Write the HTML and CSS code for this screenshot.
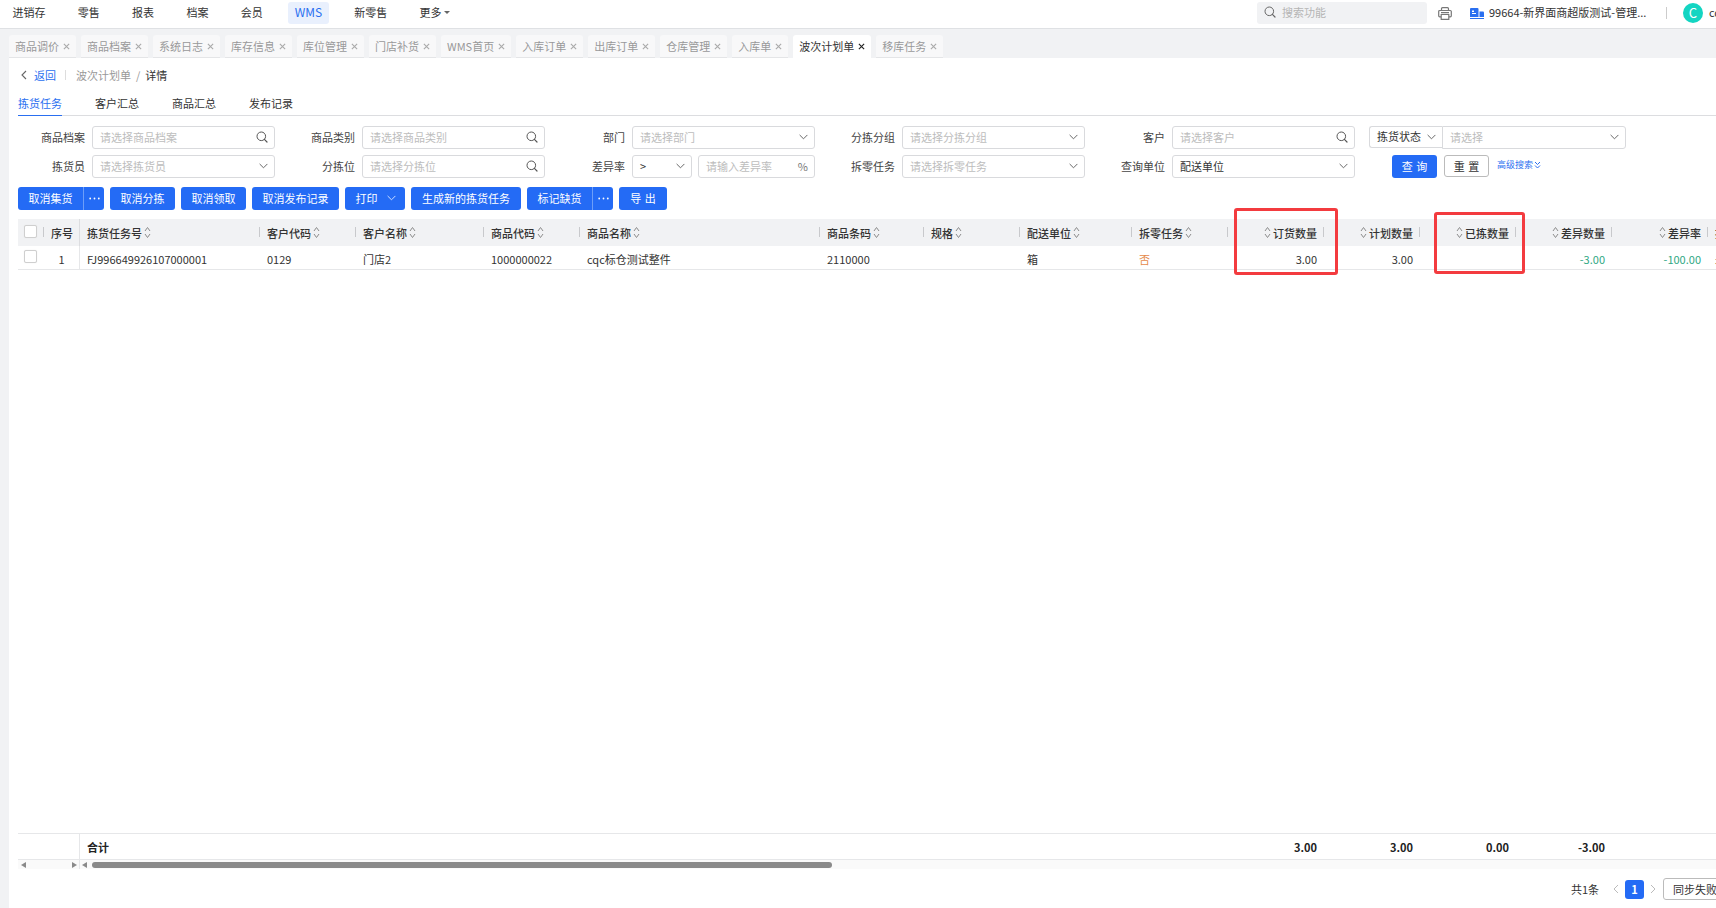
FILE: index.html
```html
<!DOCTYPE html>
<html lang="zh-CN">
<head>
<meta charset="utf-8">
<title>波次计划单详情</title>
<link rel="stylesheet" href="styles.css">
</head>
<body>
<svg class="sprite" aria-hidden="true">
  <symbol id="search" viewBox="0 0 12 12"><circle cx="5.3" cy="5.3" r="4.3" fill="none" stroke="currentColor" stroke-width="1"/><path d="M8.4 8.4 11 11" fill="none" stroke="currentColor" stroke-width="1.2" stroke-linecap="round"/></symbol>
  <symbol id="down" viewBox="0 0 10 6"><path d="M1 1l4 4 4-4" fill="none" stroke="currentColor" stroke-width="1.1" stroke-linecap="round" stroke-linejoin="round"/></symbol>
  <symbol id="close" viewBox="0 0 8 8"><path d="M1 1l6 6M7 1 1 7" fill="none" stroke="currentColor" stroke-width="1.3"/></symbol>
  <symbol id="sort" viewBox="0 0 7 13"><path d="M1 5l2.5-3.5L6 5M1 8l2.5 3.5L6 8" fill="none" stroke="#8c8c8c" stroke-width="1"/></symbol>
  <symbol id="more" viewBox="0 0 11 3"><circle cx="1.200" cy="1.500" r="0.900" fill="#fff"/><circle cx="5.500" cy="1.500" r="0.900" fill="#fff"/><circle cx="9.800" cy="1.500" r="0.900" fill="#fff"/></symbol>
</svg>

<header class="topbar">
  <nav class="menu">
    <a class="menu-item">进销存</a>
    <a class="menu-item">零售</a>
    <a class="menu-item">报表</a>
    <a class="menu-item">档案</a>
    <a class="menu-item">会员</a>
    <a class="menu-item is-active">WMS</a>
    <a class="menu-item">新零售</a>
    <a class="menu-item">更多<i class="caret"></i></a>
  </nav>
  <div class="top-right">
    <div class="global-search"><svg class="ic-12"><use href="#search"/></svg><span>搜索功能</span></div>
    <svg class="printer" viewBox="0 0 14 13"><path d="M3.500 3.500V1.700a1 1 0 0 1 1-1h5a1 1 0 0 1 1 1v1.800M3.200 9.800H1.700a1 1 0 0 1-1-1V4.500a1 1 0 0 1 1-1h10.600a1 1 0 0 1 1 1v4.300a1 1 0 0 1-1 1h-1.500M3.200 7.500h7.600v4.800H3.200zM3 5.600h8" fill="none" stroke="#777" stroke-width="1.200"/></svg>
    <svg class="shop" viewBox="0 0 14 11"><path d="M0 1a1 1 0 0 1 1-1h6.500a1 1 0 0 1 1 1v8H0z" fill="#2a6ff0"/><path d="M9.500 3.500H13a1 1 0 0 1 1 1V9H9.500z" fill="#2a6ff0"/><path d="M2 2.500h2v1.500H2zM2 5h4v1H2z" fill="#fff"/><path d="M0 10h14v1H0z" fill="#2a6ff0"/></svg>
    <span class="shop-name">99664-新界面商超版测试-管理...</span>
    <i class="top-sep"></i>
    <span class="avatar">C</span>
    <span class="user">cqc</span>
  </div>
</header>

<div class="tabbar">
  <div class="tab">商品调价<svg class="x"><use href="#close"/></svg></div>
  <div class="tab">商品档案<svg class="x"><use href="#close"/></svg></div>
  <div class="tab">系统日志<svg class="x"><use href="#close"/></svg></div>
  <div class="tab">库存信息<svg class="x"><use href="#close"/></svg></div>
  <div class="tab">库位管理<svg class="x"><use href="#close"/></svg></div>
  <div class="tab">门店补货<svg class="x"><use href="#close"/></svg></div>
  <div class="tab">WMS首页<svg class="x"><use href="#close"/></svg></div>
  <div class="tab">入库订单<svg class="x"><use href="#close"/></svg></div>
  <div class="tab">出库订单<svg class="x"><use href="#close"/></svg></div>
  <div class="tab">仓库管理<svg class="x"><use href="#close"/></svg></div>
  <div class="tab">入库单<svg class="x"><use href="#close"/></svg></div>
  <div class="tab is-active">波次计划单<svg class="x"><use href="#close"/></svg></div>
  <div class="tab">移库任务<svg class="x"><use href="#close"/></svg></div>
</div>

<main class="page">
  <div class="crumbs">
    <svg class="back-ic" viewBox="0 0 6 10"><path d="M5 1 1 5l4 4" fill="none" stroke="#666" stroke-width="1.1"/></svg>
    <a class="back">返回</a>
    <i class="crumb-sep"></i>
    <span class="crumb-muted">波次计划单</span>
    <span class="crumb-slash">/</span>
    <span class="crumb-now">详情</span>
  </div>

  <div class="subtabs">
    <a class="subtab is-active">拣货任务</a>
    <a class="subtab">客户汇总</a>
    <a class="subtab">商品汇总</a>
    <a class="subtab">发布记录</a>
  </div>

  <form class="filters">
    <div class="f-item"><label>商品档案</label><div class="field"><span class="ph">请选择商品档案</span><svg class="ic-12"><use href="#search"/></svg></div></div>
    <div class="f-item"><label>商品类别</label><div class="field"><span class="ph">请选择商品类别</span><svg class="ic-12"><use href="#search"/></svg></div></div>
    <div class="f-item"><label>部门</label><div class="field"><span class="ph">请选择部门</span><svg class="ic-down"><use href="#down"/></svg></div></div>
    <div class="f-item"><label>分拣分组</label><div class="field"><span class="ph">请选择分拣分组</span><svg class="ic-down"><use href="#down"/></svg></div></div>
    <div class="f-item"><label>客户</label><div class="field"><span class="ph">请选择客户</span><svg class="ic-12"><use href="#search"/></svg></div></div>
    <div class="f-joined">
      <div class="field field-key"><span>拣货状态</span><svg class="ic-down"><use href="#down"/></svg></div>
      <div class="field field-val"><span class="ph">请选择</span><svg class="ic-down"><use href="#down"/></svg></div>
    </div>

    <div class="f-item"><label>拣货员</label><div class="field"><span class="ph">请选择拣货员</span><svg class="ic-down"><use href="#down"/></svg></div></div>
    <div class="f-item"><label>分拣位</label><div class="field"><span class="ph">请选择分拣位</span><svg class="ic-12"><use href="#search"/></svg></div></div>
    <div class="f-item"><label>差异率</label>
      <div class="f-pair">
        <div class="field field-op"><span>&gt;</span><svg class="ic-down"><use href="#down"/></svg></div>
        <div class="field field-num"><span class="ph">请输入差异率</span><span class="pct">%</span></div>
      </div>
    </div>
    <div class="f-item"><label>拆零任务</label><div class="field"><span class="ph">请选择拆零任务</span><svg class="ic-down"><use href="#down"/></svg></div></div>
    <div class="f-item"><label>查询单位</label><div class="field"><span>配送单位</span><svg class="ic-down"><use href="#down"/></svg></div></div>
    <div class="f-actions">
      <button type="button" class="btn btn-query">查 询</button>
      <button type="button" class="btn-reset">重 置</button>
      <a class="adv">高级搜索<svg class="adv-ic" viewBox="0 0 7 8"><path d="M1 1l2.500 2.500L6 1M1 4.500 3.500 7 6 4.500" fill="none" stroke="#2a6ff0" stroke-width="1"/></svg></a>
    </div>
  </form>

  <div class="toolbar">
    <div class="btn btn-split"><span class="btn-main">取消集货</span><span class="btn-more"><svg class="more-ic"><use href="#more"/></svg></span></div>
    <button type="button" class="btn">取消分拣</button>
    <button type="button" class="btn">取消领取</button>
    <button type="button" class="btn">取消发布记录</button>
    <button type="button" class="btn btn-print">打印<svg class="ic-down"><use href="#down"/></svg></button>
    <button type="button" class="btn btn-gen">生成新的拣货任务</button>
    <div class="btn btn-split"><span class="btn-main">标记缺货</span><span class="btn-more"><svg class="more-ic"><use href="#more"/></svg></span></div>
    <button type="button" class="btn btn-export">导 出</button>
  </div>

  <section class="grid-wrap">
    <div class="clip">
      <div class="row row-head">
        <div class="c c-check"><i class="check"></i></div>
        <div class="c c-no">序号</div>
        <div class="c">拣货任务号<svg class="sort"><use href="#sort"/></svg></div>
        <div class="c">客户代码<svg class="sort"><use href="#sort"/></svg></div>
        <div class="c">客户名称<svg class="sort"><use href="#sort"/></svg></div>
        <div class="c">商品代码<svg class="sort"><use href="#sort"/></svg></div>
        <div class="c">商品名称<svg class="sort"><use href="#sort"/></svg></div>
        <div class="c">商品条码<svg class="sort"><use href="#sort"/></svg></div>
        <div class="c">规格<svg class="sort"><use href="#sort"/></svg></div>
        <div class="c">配送单位<svg class="sort"><use href="#sort"/></svg></div>
        <div class="c">拆零任务<svg class="sort"><use href="#sort"/></svg></div>
        <div class="c c-num"><svg class="sort"><use href="#sort"/></svg>订货数量</div>
        <div class="c c-num"><svg class="sort"><use href="#sort"/></svg>计划数量</div>
        <div class="c c-num"><svg class="sort"><use href="#sort"/></svg>已拣数量</div>
        <div class="c c-num"><svg class="sort"><use href="#sort"/></svg>差异数量</div>
        <div class="c c-num"><svg class="sort"><use href="#sort"/></svg>差异率</div>
        <div class="c">拣货状态</div>
      </div>
      <div class="row row-body">
        <div class="c c-check"><i class="check"></i></div>
        <div class="c c-no c-center">1</div>
        <div class="c">FJ996649926107000001</div>
        <div class="c">0129</div>
        <div class="c">门店2</div>
        <div class="c">1000000022</div>
        <div class="c">cqc标仓测试整件</div>
        <div class="c">2110000</div>
        <div class="c"></div>
        <div class="c">箱</div>
        <div class="c c-orange">否</div>
        <div class="c c-num">3.00</div>
        <div class="c c-num">3.00</div>
        <div class="c c-num"></div>
        <div class="c c-num c-green">-3.00</div>
        <div class="c c-num c-green">-100.00</div>
        <div class="c">未拣货</div>
      </div>
    </div>
    <div class="mark mark-a"></div>
    <div class="mark mark-b"></div>
  </section>

  <div class="spacer"></div>

  <div class="row row-sum">
    <div class="c c-lead"></div>
    <div class="c c-total">合计</div>
    <div class="c c-num c-s1">3.00</div>
    <div class="c c-num">3.00</div>
    <div class="c c-num">0.00</div>
    <div class="c c-num">-3.00</div>
  </div>
  <div class="hscroll">
    <div class="hs-left">
      <i class="arr arr-l"></i><i class="arr arr-r"></i>
    </div>
    <div class="hs-right">
      <i class="arr arr-l"></i><i class="thumb"></i>
    </div>
  </div>

  <footer class="pager">
    <span class="total">共1条</span>
    <svg class="pg-ic" viewBox="0 0 6 10"><path d="M5 1 1 5l4 4" fill="none" stroke="#bbb" stroke-width="1"/></svg>
    <span class="pg-num">1</span>
    <svg class="pg-ic" viewBox="0 0 6 10"><path d="m1 1 4 4-4 4" fill="none" stroke="#bbb" stroke-width="1"/></svg>
    <button type="button" class="pg-btn">同步失败</button>
  </footer>
</main>
</body>
</html>
```
FILE: styles.css
```css
* { box-sizing: border-box; }
html, body { margin: 0; height: 100%; }
body {
  width: 1716px;
  height: 908px;
  overflow: hidden;
  display: flex;
  flex-direction: column;
  background: #f1f2f4;
  color: #333;
  font: 11px/16px "Noto Sans CJK SC", "Noto Sans", sans-serif;
}
i { font-style: normal; }
svg { flex: none; }
.sprite { display: none; }
button { font: inherit; border: 0; padding: 0; }

/* top bar */
.topbar {
  flex: none;
  height: 29px;
  display: flex;
  align-items: flex-start;
  background: #fff;
  border-bottom: 1px solid #dfe1e4;
  overflow: hidden;
  padding-top: 2px;
}
.menu {
  flex: none;
  width: 1257px;
  display: flex;
  gap: 18.3px;
  padding-left: 5.5px;
}
.menu-item {
  height: 22px;
  padding: 0 7px 2px;
  display: flex;
  align-items: center;
  border-radius: 3px;
  color: #333;
}
.menu-item.is-active {
  width: 41px;
  justify-content: center;
  background: #e9f0fd;
  color: #2a6ff0;
  font-size: 12px;
}
.caret {
  margin-left: 2px;
  border: 3px solid transparent;
  border-top: 3px solid #666;
  border-bottom: 0;
}
.top-right { flex: none; display: flex; align-items: center; height: 22px; }
.global-search {
  width: 170px;
  height: 22px;
  display: flex;
  align-items: center;
  gap: 6px;
  padding: 0 0 2px 7px;
  background: #f1f2f4;
  border-radius: 3px;
  color: #b5b5b5;
}
.global-search .ic-12 { color: #666; }
.ic-12 { width: 12px; height: 12px; color: #555; }
.ic-down { width: 9px; height: 6px; color: #666; }
.printer { width: 14px; height: 13px; margin-left: 11px; }
.shop { width: 14px; height: 11px; margin-left: 18px; }
.shop-name { margin: 0 0 2px 5px; width: 160px; white-space: nowrap; color: #333; }
.top-sep { width: 1px; height: 12px; background: #ccc; margin-left: 17px; }
.avatar {
  width: 20px;
  height: 20px;
  margin-left: 16px;
  border-radius: 50%;
  background: #13d5c2;
  color: #fff;
  font-size: 13px;
  text-align: center;
  line-height: 20px;
}
.user { margin: 0 0 2px 6px; white-space: nowrap; }

/* open pages */
.tabbar {
  flex: none;
  height: 29px;
  padding: 6px 0 0 9px;
  display: flex;
  gap: 5px;
}
.tab {
  height: 23px;
  padding: 0 6px;
  display: flex;
  align-items: center;
  gap: 4px;
  background: #f8f8f9;
  border-bottom: 1px solid #e4e5e7;
  border-radius: 3px 3px 0 0;
  color: #999;
  white-space: nowrap;
}
.tab.is-active { background: #fff; border-bottom-color: #fff; color: #333; }
.x { width: 7px; height: 7px; color: #aaa; }
.is-active .x { color: #222; }

/* page */
.page {
  flex: 1;
  min-height: 0;
  margin-left: 9px;
  background: #fff;
  display: flex;
  flex-direction: column;
}
.crumbs {
  flex: none;
  height: 36px;
  display: flex;
  align-items: center;
  padding: 0 0 2px 12px;
}
.back-ic { width: 6px; height: 10px; }
.back { margin-left: 7px; color: #2a6ff0; }
.crumb-sep { width: 1px; height: 10px; background: #ddd; margin: 0 10px 0 9px; }
.crumb-muted { color: #999; }
.crumb-slash { margin: 0 5px; color: #999; }
.crumb-now { color: #333; }

.subtabs {
  flex: none;
  height: 22px;
  margin-left: 9px;
  display: flex;
  gap: 33px;
  border-bottom: 1px solid #dcdde0;
}
.subtab { height: 22px; line-height: 18px; color: #333; }
.subtab.is-active { color: #2a6ff0; border-bottom: 1px solid #2a6ff0; }

/* filters */
.filters {
  flex: none;
  margin: 10px 0 0 9px;
  display: grid;
  grid-template-columns: repeat(5, 257px) 258px;
  column-gap: 13px;
  row-gap: 6px;
  grid-auto-rows: 23px;
}
.f-item { display: flex; align-items: center; gap: 7px; }
.f-item label { flex: none; width: 67px; padding-bottom: 2px; text-align: right; color: #444; }
.field {
  flex: 1;
  min-width: 0;
  height: 23px;
  padding: 0 6px 1px 7px;
  display: flex;
  align-items: center;
  justify-content: space-between;
  background: #fff;
  border: 1px solid #d9dadd;
  border-radius: 3px;
  white-space: nowrap;
}
.ph { color: #bdbdbd; }
.field > span { margin-top: -1px; }
.f-joined { display: flex; align-items: flex-start; margin-left: 1px; }
.field-key { flex: none; width: 73px; border-right: 0; height: 22px; border-radius: 3px 0 0 3px; padding-right: 6px; }
.field-val { flex: 1; border-radius: 0 3px 3px 0; }
.f-pair { flex: 1; display: flex; gap: 6px; }
.field-op { flex: none; width: 60px; }
.pct { color: #777; }
.f-actions { display: flex; align-items: flex-start; margin-left: 24px; }
.btn-query { width: 45px; height: 22px; padding: 0 0 1px; word-spacing: 1px; }
.btn-reset {
  width: 45px;
  height: 22px;
  margin-left: 7px;
  padding: 0 0 1px;
  background: #fff;
  border: 1px solid #bbb;
  border-radius: 3px;
  color: #333;
  word-spacing: 1px;
}
.adv { display: flex; align-items: center; gap: 1px; height: 20px; margin-left: 8px; color: #2a6ff0; font-size: 9px; }
.adv-ic { width: 7px; height: 8px; }

/* toolbar */
.toolbar {
  flex: none;
  margin: 9px 0 0 9px;
  display: flex;
  gap: 6px;
}
.btn {
  height: 23px;
  padding: 0 10.5px 1px;
  display: flex;
  align-items: center;
  justify-content: center;
  background: #246bf5;
  color: #fff;
  border-radius: 3px;
  white-space: nowrap;
}
.btn-split { padding: 0; }
.btn-main { width: 65px; padding-bottom: 1px; text-align: center; }
.btn-more {
  width: 21px;
  height: 23px;
  display: flex;
  align-items: center;
  justify-content: center;
  border-left: 1px solid #6d9ef8;
}
.more-ic { width: 11px; height: 3px; }
.btn-print { width: 60px; gap: 9px; padding: 0 0 1px 1px; }
.btn-print .ic-down { color: #cfe0ff; }
.btn-gen { width: 110px; padding: 0 0 1px; }
.btn-export { width: 48px; padding: 0 0 1px; word-spacing: 1px; }

/* table */
.grid-wrap { flex: none; position: relative; margin: 9px 0 0 9px; height: 51px; }
.clip { width: 1698px; overflow: hidden; }
.row {
  display: grid;
  grid-template-columns: 26px 36px 180px 96px 128px 96px 240px 104px 96px 112px 96px 96px 96px 96px 96px 96px 96px;
  width: 1794px;
}
.c {
  position: relative;
  display: flex;
  align-items: center;
  padding: 0 7px;
  min-width: 0;
  white-space: nowrap;
}
.c-num { justify-content: flex-end; }
.c-check { padding: 0 0 0 6px; }
.check {
  width: 13px;
  height: 13px;
  background: #fff;
  border: 1px solid #cfcfcf;
  border-radius: 2px;
  box-shadow: 0 0 1px #ddd;
}
.row-head { height: 27px; background: #f1f2f4; font-weight: 500; color: #333; }
.row-head .c::after {
  content: "";
  position: absolute;
  right: 0;
  top: 8px;
  width: 1px;
  height: 10px;
  background: #c8c9cc;
}
.row-head .c-check { align-items: flex-start; padding-top: 6px; }
.row-head .c-no::after { top: 0; height: 27px; background: #dcdde0; }
.row-body { height: 24px; border-bottom: 1px solid #e6e7e9; }
.row-body .c { padding-top: 2px; }
.row-body .c-check { align-items: flex-start; padding-top: 4px; }
.row-body .c-no { border-right: 1px solid #e6e7e9; }
.c-center { justify-content: center; }
.sort { width: 7px; height: 13px; margin: 0 2px; }
.c-orange { color: #e58a4b; }
.c-green { color: #2fa883; }
.mark { position: absolute; border: 3px solid #f33b3f; border-radius: 3px; }
.mark-a { left: 1216px; top: -11px; width: 104px; height: 67px; }
.mark-b { left: 1416px; top: -7px; width: 91px; height: 62px; }

.spacer { flex: 1; }

.row-sum {
  flex: none;
  margin-left: 9px;
  height: 27px;
  width: 1698px;
  overflow: hidden;
  border-top: 1px solid #e6e7e9;
  border-bottom: 1px solid #e6e7e9;
  font-weight: 700;
  color: #222;
}
.c-lead { grid-column: 1 / 3; border-right: 1px solid #e6e7e9; }
.c-total { grid-column: 3; }
.c-s1 { grid-column: 12; }

.hscroll {
  flex: none;
  margin-left: 9px;
  height: 9px;
  display: flex;
  background: #fafafa;
}
.hs-left {
  flex: none;
  width: 62px;
  display: flex;
  align-items: center;
  justify-content: space-between;
  padding: 0 2px 0 3px;
  border-right: 1px solid #e6e7e9;
}
.hs-right { flex: 1; display: flex; align-items: center; padding-left: 2px; }
.arr { border: 3.5px solid transparent; }
.arr-l { border-left: 0; border-right: 5px solid #8a8a8a; }
.arr-r { border-right: 0; border-left: 5px solid #8a8a8a; }
.thumb {
  width: 740px;
  height: 6px;
  margin-left: 5px;
  background: #8a8a8a;
  border-radius: 3px;
}

.pager {
  flex: none;
  height: 39px;
  padding: 1px 0 0 1562px;
  display: flex;
  align-items: center;
  white-space: nowrap;
}
.pager > * { flex: none; }
.total { width: 42px; }
.pg-ic { width: 6px; height: 10px; }
.pg-num {
  width: 19px;
  height: 19px;
  margin: 0 6px;
  border-radius: 3px;
  background: #246bf5;
  color: #fff;
  text-align: center;
  line-height: 19px;
  font-weight: 700;
}
.pg-btn {
  width: 80px;
  height: 22px;
  margin-left: 7px;
  padding-left: 9px;
  background: #fff;
  border: 1px solid #bbb;
  border-radius: 3px;
  text-align: left;
  color: #333;
}
```
